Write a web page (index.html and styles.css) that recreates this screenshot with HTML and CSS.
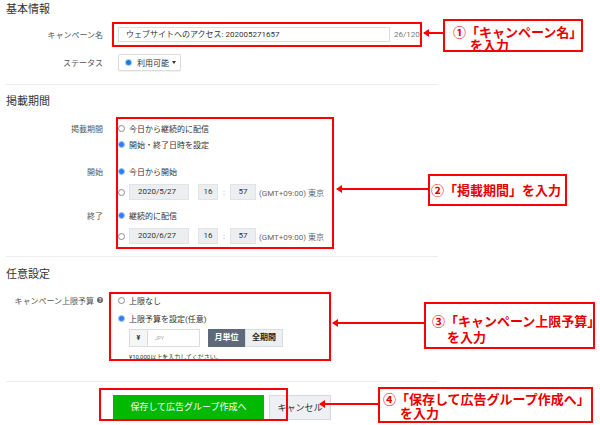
FILE: index.html
```html
<!DOCTYPE html>
<html lang="ja">
<head>
    <meta charset="UTF-8">
    <title>キャンペーン作成</title>
    <link rel="stylesheet" href="styles.css">
</head>
<body>
<div class="page">

    <!-- 基本情報 -->
    <h2 class="section-title">基本情報</h2>
    <div class="field field-name">
        <div class="field-label">キャンペーン名</div>
        <div class="text-input">ウェブサイトへのアクセス: 202005271657</div>
        <div class="counter">26/120</div>
        <div class="mark mark-name"></div>
        <div class="arrow arrow-name"></div>
        <div class="callout callout-name">①「キャンペーン名」<br>を入力</div>
    </div>
    <div class="field field-status">
        <div class="field-label">ステータス</div>
        <div class="status-button"><span class="status-dot"></span>利用可能<span class="caret"></span></div>
    </div>

    <div class="divider"></div>

    <!-- 掲載期間 -->
    <h2 class="section-title section-gap">掲載期間</h2>
    <div class="group group-period">
        <div class="option">
            <div class="field-label">掲載期間</div>
            <span class="radio"></span>今日から継続的に配信
        </div>
        <div class="option">
            <div class="field-label"></div>
            <span class="radio is-checked"></span>開始・終了日時を設定
        </div>
        <div class="option option-start">
            <div class="field-label">開始</div>
            <span class="radio is-checked"></span>今日から開始
        </div>
        <div class="option option-date">
            <div class="field-label"></div>
            <span class="radio"></span>
            <div class="date-box">2020/5/27</div>
            <div class="time-box">16</div>
            <div class="time-sep">:</div>
            <div class="time-box time-min">57</div>
            <div class="tz">(GMT+09:00) 東京</div>
        </div>
        <div class="option option-end">
            <div class="field-label">終了</div>
            <span class="radio is-checked"></span>継続的に配信
        </div>
        <div class="option option-date">
            <div class="field-label"></div>
            <span class="radio"></span>
            <div class="date-box">2020/6/27</div>
            <div class="time-box">16</div>
            <div class="time-sep">:</div>
            <div class="time-box time-min">57</div>
            <div class="tz">(GMT+09:00) 東京</div>
        </div>
        <div class="mark mark-period"></div>
        <div class="arrow arrow-period"></div>
        <div class="callout callout-period">②「掲載期間」を入力</div>
    </div>

    <div class="divider divider-period"></div>

    <!-- 任意設定 -->
    <h2 class="section-title section-gap">任意設定</h2>
    <div class="group group-budget">
        <div class="option">
            <div class="field-label">キャンペーン上限予算<span class="help-icon">?</span></div>
            <span class="radio"></span>上限なし
        </div>
        <div class="option option-limit">
            <div class="field-label"></div>
            <span class="radio is-checked"></span>上限予算を設定(任意)
        </div>
        <div class="budget-row">
            <div class="field-label"></div>
            <div class="yen-cell">¥</div>
            <div class="amount-input">JPY</div>
            <div class="toggle">
                <div class="toggle-item is-active">月単位</div>
                <div class="toggle-item">全期間</div>
            </div>
        </div>
        <div class="help-row">
            <div class="field-label"></div>
            <div class="help-text">¥10,000以上を入力してください。</div>
        </div>
        <div class="mark mark-budget"></div>
        <div class="arrow arrow-budget"></div>
        <div class="callout callout-budget">③「キャンペーン上限予算」<br>を入力</div>
    </div>

    <div class="divider divider-budget"></div>

    <!-- ボタン -->
    <div class="actions">
        <div class="btn btn-save">保存して広告グループ作成へ</div>
        <div class="btn btn-cancel">キャンセル</div>
        <div class="mark mark-save"></div>
        <div class="arrow arrow-save"></div>
        <div class="callout callout-save">④「保存して広告グループ作成へ」<br>を入力</div>
    </div>

</div>
</body>
</html>
```

FILE: styles.css
```css
/* 全体 */
* {
    box-sizing: border-box;
}

body {
    margin: 0;
    background: #fff;
    font-family: Roboto, "Noto Sans CJK JP", sans-serif;
    font-size: 8px;
    color: #333;
}

.page {
    position: relative;
    width: 600px;
    height: 425px;
    padding-left: 6px;
    overflow: hidden;
}

/* 見出し */
.section-title {
    margin: 0;
    height: 20px;
    line-height: 20px;
    font-size: 11px;
    font-weight: normal;
    color: #333;
}

.section-gap {
    margin-top: 7px;
}

.divider {
    width: 432px;
    height: 1px;
    margin-top: 13px;
    background: #ececec;
}

.divider-period {
    margin-top: 12px;
}

.divider-period + .section-gap {
    margin-top: 8px;
}

.divider-budget {
    margin-top: 20px;
}

/* フォーム行 */
.field,
.option,
.budget-row,
.help-row {
    position: relative;
    display: flex;
    align-items: center;
}

.field-label {
    display: flex;
    justify-content: flex-end;
    align-items: center;
    width: 97px;
    margin-right: 15px;
    flex-shrink: 0;
    color: #555;
    white-space: nowrap;
}

.field-name {
    margin-top: 7px;
    height: 15px;
}

.text-input {
    width: 272px;
    height: 15px;
    line-height: 13px;
    padding-left: 7px;
    border: 1px solid #ddd;
    color: #333;
    white-space: nowrap;
}

.counter {
    margin-left: 4px;
    color: #777;
}

.field-status {
    margin-top: 12px;
    height: 17px;
}

.status-button {
    display: flex;
    align-items: center;
    width: 63px;
    height: 17px;
    padding-left: 7px;
    border: 1px solid #dcdcdc;
    border-radius: 2px;
    background: #fff;
    box-shadow: 0 1px 1px rgba(0, 0, 0, 0.06);
    color: #333;
}

.status-dot {
    width: 5px;
    height: 5px;
    margin-right: 6px;
    border-radius: 50%;
    background: #1f7ae0;
    box-shadow: 0 0 0 1px #a9cdf6;
}

.caret {
    margin-left: 3px;
    border-top: 3px solid #333;
    border-left: 2px solid transparent;
    border-right: 2px solid transparent;
}

/* ラジオボタン */
.option {
    height: 16px;
    color: #333;
    white-space: nowrap;
}

.radio {
    width: 7px;
    height: 7px;
    margin-right: 4px;
    flex-shrink: 0;
    border: 1px solid #8a8a8a;
    border-radius: 50%;
    background: #fff;
}

.radio.is-checked {
    background: #2a7ff0;
    border-color: #a3c8f6;
}

/* 掲載期間 */
.group {
    position: relative;
}

.group-period {
    margin-top: 8px;
}

.option-start {
    margin-top: 11px;
}

.option-date {
    margin-top: 5px;
}

.option-end {
    margin-top: 7px;
}

.date-box,
.time-box {
    height: 16px;
    line-height: 14px;
    border: 1px solid #e1e4e7;
    background: #eceff1;
    color: #333;
}

.date-box {
    width: 60px;
    padding-left: 8px;
}

.time-box {
    width: 20px;
    margin-left: 9px;
    text-align: center;
}

.time-box.time-min {
    width: 26px;
    margin-left: 0;
}

.time-sep {
    width: 12px;
    text-align: center;
    color: #888;
}

.tz {
    margin-left: 3px;
    color: #666;
}

/* 任意設定 */
.group-budget {
    margin-top: 7px;
}

.option-limit {
    margin-top: 2px;
}

.help-icon {
    display: inline-flex;
    justify-content: center;
    align-items: center;
    width: 6px;
    height: 6px;
    margin-left: 3px;
    border-radius: 50%;
    background: #666;
    color: #fff;
    font-size: 5px;
    font-weight: bold;
    line-height: 6px;
}

.budget-row {
    margin-top: 3px;
    height: 18px;
}

.yen-cell {
    width: 19px;
    height: 18px;
    margin-left: 11px;
    line-height: 16px;
    text-align: center;
    border: 1px solid #dcdcdc;
    background: #f6f6f6;
    font-size: 7px;
    font-weight: bold;
}

.amount-input {
    width: 52px;
    height: 18px;
    padding-left: 7px;
    line-height: 16px;
    border: 1px solid #dcdcdc;
    border-left: none;
    background: #fff;
    color: #aaa;
    font-size: 5px;
}

.toggle {
    display: flex;
    margin-left: 8px;
}

.toggle-item {
    width: 38px;
    height: 18px;
    line-height: 16px;
    text-align: center;
    border: 1px solid #d9dde1;
    background: #edf0f2;
    color: #222;
    font-weight: bold;
}

.toggle-item.is-active {
    width: 37px;
    border-color: #5e6a79;
    background: #5e6a79;
    color: #fff;
}

.help-row {
    margin-top: 6px;
    height: 8px;
}

.help-text {
    margin-left: 11px;
    font-size: 6px;
    line-height: 8px;
    color: #333;
    white-space: nowrap;
}

/* ボタン */
.actions {
    position: relative;
    display: flex;
    justify-content: center;
    gap: 5px;
    width: 432px;
    margin-top: 13px;
}

.btn {
    height: 24px;
    line-height: 24px;
    text-align: center;
    font-size: 9px;
    font-family: "Noto Sans CJK JP", sans-serif;
}

.btn-save {
    width: 151px;
    background: #00b900;
    color: #fff;
}

.btn-cancel {
    width: 62px;
    height: 25px;
    line-height: 23px;
    border: 1px solid #d5d9de;
    background: #eef0f3;
    color: #333;
}

/* 注釈（赤枠・矢印・吹き出し） */
.mark {
    position: absolute;
    border: 2px solid #f00;
}

.mark-name {
    left: 106px;
    top: -5px;
    width: 310px;
    height: 25px;
}

.mark-period {
    left: 110px;
    top: -3px;
    width: 218px;
    height: 132px;
}

.mark-budget {
    left: 103px;
    top: 0;
    width: 222px;
    height: 69px;
}

.mark-save {
    left: 93px;
    top: -7px;
    width: 189px;
    height: 33px;
}

.arrow {
    position: absolute;
    height: 2px;
    background: #f00;
}

.arrow::before {
    content: '';
    position: absolute;
    left: -1px;
    top: -3px;
    border-right: 6px solid #f00;
    border-top: 4px solid transparent;
    border-bottom: 4px solid transparent;
}

.arrow-name {
    left: 418px;
    top: 5px;
    width: 19px;
}

.arrow-period {
    left: 331px;
    top: 68px;
    width: 91px;
}

.arrow-budget {
    left: 327px;
    top: 30px;
    width: 91px;
}

.arrow-save {
    left: 314px;
    top: 8px;
    width: 58px;
}

.callout {
    position: absolute;
    border: 2px solid #f00;
    background: #fff;
    color: #e60000;
    font-family: "Noto Sans CJK JP", sans-serif;
    font-size: 13px;
    font-weight: bold;
    white-space: nowrap;
}

.callout-name {
    left: 437px;
    top: -8px;
    width: 140px;
    height: 33px;
    padding: 4px 0 0 25px;
    text-indent: -17px;
    line-height: 13px;
}

.callout-period {
    left: 422px;
    top: 54px;
    width: 139px;
    height: 32px;
    padding-left: 1px;
    line-height: 28px;
}

.callout-budget {
    left: 418px;
    top: 10px;
    width: 171px;
    height: 47px;
    padding: 9px 0 0 21px;
    text-indent: -15px;
    line-height: 16px;
}

.callout-save {
    left: 372px;
    top: -8px;
    width: 215px;
    height: 36px;
    padding: 3px 0 0 20px;
    text-indent: -17px;
    line-height: 14px;
}
```
